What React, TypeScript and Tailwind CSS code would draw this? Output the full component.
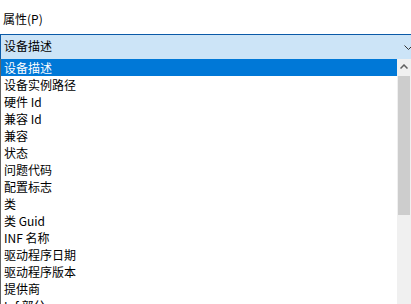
import React from "react";

const items = [
  "设备描述",
  "设备实例路径",
  "硬件 Id",
  "兼容 Id",
  "兼容",
  "状态",
  "问题代码",
  "配置标志",
  "类",
  "类 Guid",
  "INF 名称",
  "驱动程序日期",
  "驱动程序版本",
  "提供商",
  "Inf 部分",
];

export default function App() {
  return (
    <div
      className="w-[411px] h-[304px] overflow-hidden bg-white text-[12px] text-black"
      style={{ fontFamily: '"Microsoft YaHei", "Noto Sans CJK SC", "Noto Sans", sans-serif' }}
    >
      <div className="pl-[3px] pt-[10px] h-[34px] leading-[17px]">属性(P)</div>
      <div className="relative h-[25px] w-[420px] border-t border-l border-[#0a5aa8] bg-[#cce4f7] pl-[3px] leading-[22px]">
        设备描述
        <svg className="absolute left-[403px] top-[10px]" width="9" height="6" viewBox="0 0 9 6">
          <path d="M0.5 0.5 L4.5 4.5 L8.5 0.5" fill="none" stroke="#333" strokeWidth="1" />
        </svg>
      </div>
      <div className="flex h-[250px] border-l border-[#646464]">
        <div className="flex-1 flex flex-col">
          {items.map((t, i) => (
            <div
              key={t}
              className={
                "h-[17px] shrink-0 pl-[3px] leading-[17px] whitespace-nowrap " +
                (i === 0 ? "bg-[#0078d7] text-white" : "")
              }
            >
              {t}
            </div>
          ))}
        </div>
        <div className="w-[14px] flex flex-col bg-[#f0f0f0]">
          <div className="h-[17px] flex items-start pt-[5px] pl-[3px] bg-[#f0f0f0]">
            <svg width="8" height="5" viewBox="0 0 8 5">
              <path d="M0.5 4.5 L4 1 L7.5 4.5" fill="none" stroke="#606060" strokeWidth="1.5" />
            </svg>
          </div>
          <div className="h-[139px] mx-[1px] bg-[#cdcdcd]" />
        </div>
      </div>
    </div>
  );
}
